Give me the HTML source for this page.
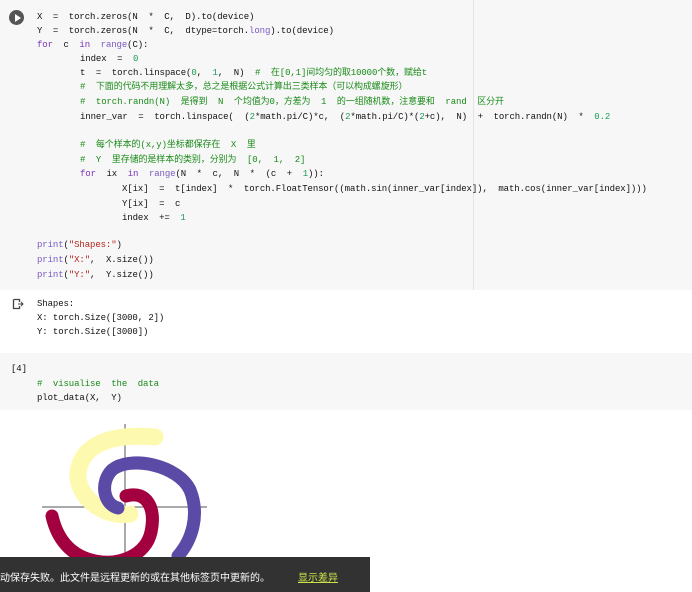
<!DOCTYPE html>
<html><head><meta charset="utf-8"><style>
body{margin:0;width:692px;height:592px;overflow:hidden;background:#fff;position:relative;font-family:"Liberation Mono","Noto Sans CJK SC",monospace;}
.cell{position:absolute;left:0;width:692px;background:#f7f7f7;}
.l{position:absolute;white-space:pre;font-size:9px;color:#111;line-height:12px;letter-spacing:-0.1px;}
.c{color:#1a8a1a}.k{color:#7a33b8}.n{color:#1c9a5a}.s{color:#b3261e}.b{color:#7a5ac0}
</style></head><body>
<div class="cell" style="top:0;height:290px"></div>
<div style="position:absolute;left:473px;top:0;width:1px;height:290px;background:#e4e4e4"></div>
<div style="position:absolute;left:9px;top:10px;width:15px;height:15px;border-radius:50%;background:#555"></div>
<div style="position:absolute;left:15px;top:14px;width:0;height:0;border-left:6px solid #fff;border-top:4px solid transparent;border-bottom:4px solid transparent"></div>
<div class="l" style="left:37px;top:11px">X  =  torch.zeros(N  *  C,  D).to(device)</div>
<div class="l" style="left:37px;top:25px">Y  =  torch.zeros(N  *  C,  dtype=torch.<span class="b">long</span>).to(device)</div>
<div class="l" style="left:37px;top:39px"><span class="k">for</span>  c  <span class="k">in</span>  <span class="b">range</span>(C):</div>
<div class="l" style="left:80px;top:53px">index  =  <span class="n">0</span></div>
<div class="l" style="left:80px;top:67px">t  =  torch.linspace(<span class="n">0</span>,  <span class="n">1</span>,  N)  <span class="c">#  在[0,1]间均匀的取10000个数，赋给t</span></div>
<div class="l c" style="left:80px;top:81px">#  下面的代码不用理解太多，总之是根据公式计算出三类样本（可以构成螺旋形）</div>
<div class="l c" style="left:80px;top:96px">#  torch.randn(N)  是得到  N  个均值为0，方差为  1  的一组随机数，注意要和  rand  区分开</div>
<div class="l" style="left:80px;top:111px">inner_var  =  torch.linspace(  (<span class="n">2</span>*math.pi/C)*c,  (<span class="n">2</span>*math.pi/C)*(<span class="n">2</span>+c),  N)  +  torch.randn(N)  *  <span class="n">0.2</span></div>
<div class="l c" style="left:80px;top:139px">#  每个样本的(x,y)坐标都保存在  X  里</div>
<div class="l c" style="left:80px;top:154px">#  Y  里存储的是样本的类别，分别为  [0,  1,  2]</div>
<div class="l" style="left:80px;top:168px"><span class="k">for</span>  ix  <span class="k">in</span>  <span class="b">range</span>(N  *  c,  N  *  (c  +  <span class="n">1</span>)):</div>
<div class="l" style="left:122px;top:183px">X[ix]  =  t[index]  *  torch.FloatTensor((math.sin(inner_var[index]),  math.cos(inner_var[index])))</div>
<div class="l" style="left:122px;top:198px">Y[ix]  =  c</div>
<div class="l" style="left:122px;top:212px">index  +=  <span class="n">1</span></div>
<div class="l" style="left:37px;top:239px"><span class="b">print</span>(<span class="s">"Shapes:"</span>)</div>
<div class="l" style="left:37px;top:254px"><span class="b">print</span>(<span class="s">"X:"</span>,  X.size())</div>
<div class="l" style="left:37px;top:269px"><span class="b">print</span>(<span class="s">"Y:"</span>,  Y.size())</div>
<svg style="position:absolute;left:12px;top:298px" width="12" height="12"><path d="M1.5 1.5H7.5V4M1.5 1.5V10.5H7.5V8" fill="none" stroke="#444" stroke-width="1.3"/><path d="M6 6H11M9 4L11 6L9 8" fill="none" stroke="#444" stroke-width="1"/></svg>
<div class="l" style="left:37px;top:298px">Shapes:</div>
<div class="l" style="left:37px;top:312px">X: torch.Size([3000, 2])</div>
<div class="l" style="left:37px;top:326px">Y: torch.Size([3000])</div>
<div class="cell" style="top:353px;height:57px"></div>
<div class="l" style="left:11px;top:363px">[4]</div>
<div class="l c" style="left:37px;top:378px">#  visualise  the  data</div>
<div class="l" style="left:37px;top:392px">plot_data(X,  Y)</div>
<svg style="position:absolute;left:0;top:420px" width="692" height="172">
<line x1="42" y1="87" x2="207" y2="87" stroke="#555" stroke-width="1"/>
<line x1="125" y1="4" x2="125" y2="172" stroke="#555" stroke-width="1"/>
<g fill="none" stroke-linecap="round">
<path d="M130,94 C100,98 76,74 78,52 C82,25 110,13 155,17" stroke="#fdfab0" stroke-width="17"/>
<path d="M118,88 C103,84 100,62 112,50 C130,35 178,45 190,70 C200,95 192,120 178,136" stroke="#5b4aa6" stroke-width="13"/>
<path d="M126,76 C147,70 156,88 151,112 C146,135 120,146 95,141 C70,136 57,118 52,96" stroke="#a3003f" stroke-width="13"/>
</g>
</svg>
<div style="position:absolute;left:0;top:557px;width:370px;height:35px;background:#323232"></div>
<div style="position:absolute;left:0;top:569px;font-family:'Liberation Sans','Noto Sans CJK SC',sans-serif;font-size:10px;color:#fff;white-space:pre">动保存失败。此文件是远程更新的或在其他标签页中更新的。</div>
<div style="position:absolute;left:298px;top:569px;font-family:'Liberation Sans','Noto Sans CJK SC',sans-serif;font-size:10px;color:#cde34a;text-decoration:underline">显示差异</div>
</body></html>
